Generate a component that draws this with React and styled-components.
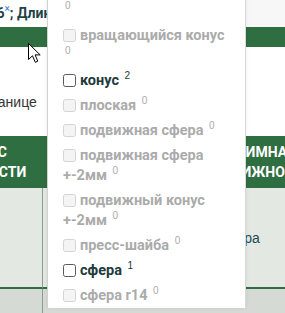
import React from "react";
import styled, { createGlobalStyle } from "styled-components";

const GlobalStyle = createGlobalStyle`
  body {
    margin: 0;
    font-family: "Liberation Sans", Arial, sans-serif;
    background: #ffffff;
  }
`;

const boldFont = `Roboto, "Liberation Sans", Arial, sans-serif`;

const Page = styled.div`
  position: relative;
  width: 285px;
  height: 313px;
  overflow: hidden;
  background: #ffffff;
`;

const TopRow = styled.div`
  display: flex;
  height: 27px;
`;

const Tags = styled.div`
  flex: 0 0 245px;
  background: #ffffff;
  white-space: nowrap;
  overflow: hidden;
  padding-top: 3px;
  font-family: ${boldFont};
  font-size: 14px;
  font-weight: bold;
  color: #1f4447;
  text-indent: -70px;
`;

const TagRemove = styled.sup`
  color: #3a78c9;
  font-weight: normal;
  font-size: 10px;
`;

const TopFill = styled.div`
  flex: 1;
  background: #f7f7f7;
`;

const GreenBar = styled.div`
  height: 20px;
  background: #2f6e41;
`;

const Info = styled.div`
  height: 89px;
  display: flex;
  align-items: flex-end;
  padding-bottom: 26px;
  box-sizing: border-box;
  font-size: 14px;
  color: #333;
  white-space: nowrap;
  text-indent: -100px;
`;

const Table = styled.div`
  display: grid;
  grid-template-columns: 119px 159px 110px;
  margin-left: -76px;
  width: 388px;
`;

const HeadCell = styled.div`
  height: 52px;
  background: #2f6e41;
  color: #ffffff;
  font-family: ${boldFont};
  font-size: 14px;
  font-weight: bold;
  line-height: 20px;
  text-transform: uppercase;
  text-align: center;
  display: flex;
  align-items: center;
  justify-content: center;
`;

const BodyCell = styled.div`
  height: 99px;
  background: #e3e8e2;
  border-bottom: 2px solid #2f6e41;
  border-right: ${(p) => (p.$line ? "1px solid #8c9b8d" : "none")};
  display: flex;
  align-items: center;
  padding-left: 16px;
  font-size: 14px;
  color: #1e4a55;
`;

const FootCell = styled.div`
  height: 30px;
  background: #d5dad4;
  border-right: ${(p) => (p.$line ? "1px solid #8c9b8d" : "none")};
`;

const Cursor = styled.svg`
  position: absolute;
  left: 28px;
  top: 43px;
`;

const Dropdown = styled.div`
  position: absolute;
  left: 47px;
  top: -22px;
  width: 197px;
  background: #ffffff;
  border-left: 1px solid #d2d2d2;
  border-right: 1px solid #d8d8d8;
  box-shadow: 0 0 4px rgba(0, 0, 0, 0.08);
`;

const Option = styled.label`
  display: block;
  padding: 3px 16px 2px 15px;
  line-height: 20px;
  font-family: ${boldFont};
  font-size: 14.5px;
  font-weight: bold;
  color: ${(p) => (p.$off ? "#ababab" : "#1e3a3d")};
`;

const Box = styled.span`
  display: inline-block;
  box-sizing: border-box;
  width: 13px;
  height: 13px;
  margin-right: 4px;
  vertical-align: -2px;
  border-radius: 2.5px;
  border: 1px solid ${(p) => (p.$off ? "#d4d4d4" : "#5a5a5a")};
  background: ${(p) => (p.$off ? "#f4f4f4" : "#ffffff")};
`;

const Count = styled.sup`
  font-family: "Liberation Sans", Arial, sans-serif;
  font-size: 10px;
  font-weight: normal;
  line-height: 0;
  margin-left: 2px;
`;

const options = [
  { label: "вращающаяся сфера", count: 0, off: true },
  { label: "вращающийся конус", count: 0, off: true },
  { label: "конус", count: 2, off: false },
  { label: "плоская", count: 0, off: true },
  { label: "подвижная сфера", count: 0, off: true },
  { label: "подвижная сфера +-2мм", count: 0, off: true },
  { label: "подвижный конус +-2мм", count: 0, off: true },
  { label: "пресс-шайба", count: 0, off: true },
  { label: "сфера", count: 1, off: false },
  { label: "сфера r14", count: 0, off: true },
];

export default function App() {
  return (
    <Page>
      <GlobalStyle />
      <TopRow>
        <Tags>
          Диаметр: 6<TagRemove>×</TagRemove>; Длина: 40<TagRemove>×</TagRemove>
        </Tags>
        <TopFill />
      </TopRow>
      <GreenBar />
      <Info>Товаров на странице</Info>
      <Table>
        <HeadCell>
          Класс
          <br />
          жесткости
        </HeadCell>
        <HeadCell>Тип опоры</HeadCell>
        <HeadCell>
          Взаимная
          <br />
          подвижность
        </HeadCell>
        <BodyCell $line />
        <BodyCell>конус</BodyCell>
        <BodyCell>сфера</BodyCell>
        <FootCell $line />
        <FootCell />
        <FootCell />
      </Table>
      <Cursor width="14" height="21" viewBox="0 0 14 21">
        <path
          d="M0.5 0.5 L0.5 16.5 L4.5 12.8 L7.3 19.3 L9.8 18.2 L7.1 11.9 L12.2 11.9 Z"
          fill="#ffffff"
          stroke="#000000"
          strokeWidth="1"
          strokeLinejoin="miter"
        />
      </Cursor>
      <Dropdown>
        {options.map((o) => (
          <Option key={o.label} $off={o.off}>
            <Box $off={o.off} />
            {o.label} <Count>{o.count}</Count>
          </Option>
        ))}
      </Dropdown>
    </Page>
  );
}
